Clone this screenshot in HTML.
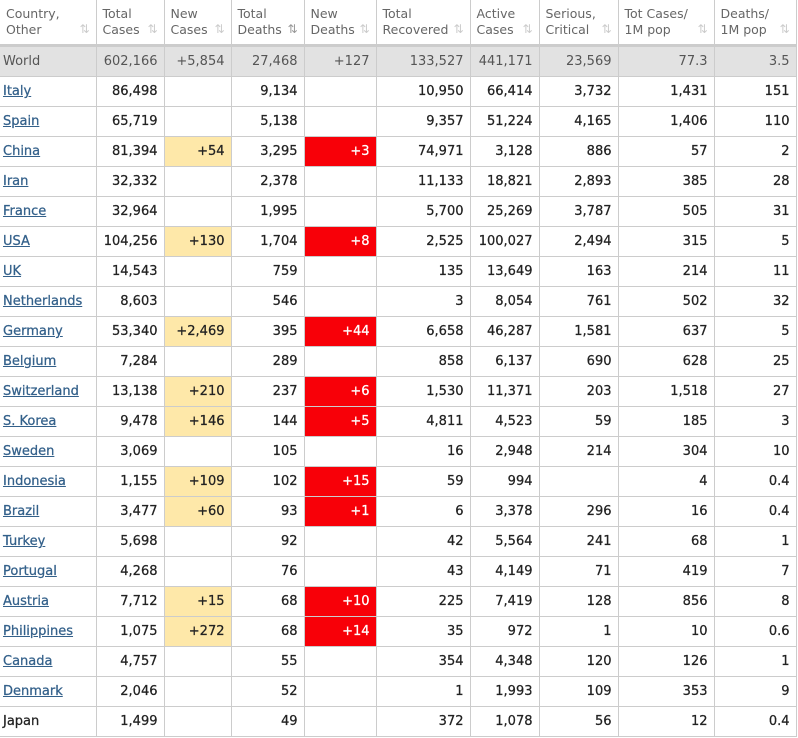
<!DOCTYPE html>
<html><head><meta charset="utf-8"><style>
body{margin:0;background:#fff;font-family:"DejaVu Sans",Verdana,sans-serif;}
table{border-collapse:collapse;table-layout:fixed;width:796px;font-size:13px;}
td,th{border:1px solid #ccc;height:29px;padding:0 6px;text-align:right;color:#222;white-space:nowrap;overflow:hidden;}
th{height:44px;font-weight:normal;color:#666;text-align:left;vertical-align:middle;font-size:12.5px;line-height:16px;border-bottom:3px solid #ccc;border-top:none;position:relative;padding:0 6px}
th span{position:absolute;right:6px;bottom:7px;color:#ccc;font-size:12px}
td{font-weight:normal;color:#222;-webkit-text-stroke:0.25px #222}
td:first-child{text-align:left;padding-left:3px}
td a{color:#33608a;text-decoration:underline;-webkit-text-stroke:0.25px #33608a}
tr.w td{background:#e2e2e2;color:#555;-webkit-text-stroke:0}
.y{background:#fee8a9}
td.r{background:#f80008;color:#fff;-webkit-text-stroke:0.25px #fff}
td:first-child,th:first-child{border-left:none}
</style></head><body>
<table>
<colgroup><col style="width:96px"><col style="width:68px"><col style="width:67px"><col style="width:73px"><col style="width:72px"><col style="width:94px"><col style="width:69px"><col style="width:79px"><col style="width:96px"><col style="width:82px"></colgroup>
<tr><th>Country,<br>Other<span>⇅</span></th><th>Total<br>Cases<span>⇅</span></th><th>New<br>Cases<span>⇅</span></th><th>Total<br>Deaths<span style="color:#999">⇅</span></th><th>New<br>Deaths<span>⇅</span></th><th>Total<br>Recovered<span>⇅</span></th><th>Active<br>Cases<span>⇅</span></th><th>Serious,<br>Critical<span>⇅</span></th><th>Tot Cases/<br>1M pop<span>⇅</span></th><th>Deaths/<br>1M pop<span>⇅</span></th></tr>
<tr class="w"><td>World</td><td>602,166</td><td>+5,854</td><td>27,468</td><td>+127</td><td>133,527</td><td>441,171</td><td>23,569</td><td>77.3</td><td>3.5</td></tr>
<tr><td><a>Italy</a></td><td>86,498</td><td></td><td>9,134</td><td></td><td>10,950</td><td>66,414</td><td>3,732</td><td>1,431</td><td>151</td></tr>
<tr><td><a>Spain</a></td><td>65,719</td><td></td><td>5,138</td><td></td><td>9,357</td><td>51,224</td><td>4,165</td><td>1,406</td><td>110</td></tr>
<tr><td><a>China</a></td><td>81,394</td><td class="y">+54</td><td>3,295</td><td class="r">+3</td><td>74,971</td><td>3,128</td><td>886</td><td>57</td><td>2</td></tr>
<tr><td><a>Iran</a></td><td>32,332</td><td></td><td>2,378</td><td></td><td>11,133</td><td>18,821</td><td>2,893</td><td>385</td><td>28</td></tr>
<tr><td><a>France</a></td><td>32,964</td><td></td><td>1,995</td><td></td><td>5,700</td><td>25,269</td><td>3,787</td><td>505</td><td>31</td></tr>
<tr><td><a>USA</a></td><td>104,256</td><td class="y">+130</td><td>1,704</td><td class="r">+8</td><td>2,525</td><td>100,027</td><td>2,494</td><td>315</td><td>5</td></tr>
<tr><td><a>UK</a></td><td>14,543</td><td></td><td>759</td><td></td><td>135</td><td>13,649</td><td>163</td><td>214</td><td>11</td></tr>
<tr><td><a>Netherlands</a></td><td>8,603</td><td></td><td>546</td><td></td><td>3</td><td>8,054</td><td>761</td><td>502</td><td>32</td></tr>
<tr><td><a>Germany</a></td><td>53,340</td><td class="y">+2,469</td><td>395</td><td class="r">+44</td><td>6,658</td><td>46,287</td><td>1,581</td><td>637</td><td>5</td></tr>
<tr><td><a>Belgium</a></td><td>7,284</td><td></td><td>289</td><td></td><td>858</td><td>6,137</td><td>690</td><td>628</td><td>25</td></tr>
<tr><td><a>Switzerland</a></td><td>13,138</td><td class="y">+210</td><td>237</td><td class="r">+6</td><td>1,530</td><td>11,371</td><td>203</td><td>1,518</td><td>27</td></tr>
<tr><td><a>S. Korea</a></td><td>9,478</td><td class="y">+146</td><td>144</td><td class="r">+5</td><td>4,811</td><td>4,523</td><td>59</td><td>185</td><td>3</td></tr>
<tr><td><a>Sweden</a></td><td>3,069</td><td></td><td>105</td><td></td><td>16</td><td>2,948</td><td>214</td><td>304</td><td>10</td></tr>
<tr><td><a>Indonesia</a></td><td>1,155</td><td class="y">+109</td><td>102</td><td class="r">+15</td><td>59</td><td>994</td><td></td><td>4</td><td>0.4</td></tr>
<tr><td><a>Brazil</a></td><td>3,477</td><td class="y">+60</td><td>93</td><td class="r">+1</td><td>6</td><td>3,378</td><td>296</td><td>16</td><td>0.4</td></tr>
<tr><td><a>Turkey</a></td><td>5,698</td><td></td><td>92</td><td></td><td>42</td><td>5,564</td><td>241</td><td>68</td><td>1</td></tr>
<tr><td><a>Portugal</a></td><td>4,268</td><td></td><td>76</td><td></td><td>43</td><td>4,149</td><td>71</td><td>419</td><td>7</td></tr>
<tr><td><a>Austria</a></td><td>7,712</td><td class="y">+15</td><td>68</td><td class="r">+10</td><td>225</td><td>7,419</td><td>128</td><td>856</td><td>8</td></tr>
<tr><td><a>Philippines</a></td><td>1,075</td><td class="y">+272</td><td>68</td><td class="r">+14</td><td>35</td><td>972</td><td>1</td><td>10</td><td>0.6</td></tr>
<tr><td><a>Canada</a></td><td>4,757</td><td></td><td>55</td><td></td><td>354</td><td>4,348</td><td>120</td><td>126</td><td>1</td></tr>
<tr><td><a>Denmark</a></td><td>2,046</td><td></td><td>52</td><td></td><td>1</td><td>1,993</td><td>109</td><td>353</td><td>9</td></tr>
<tr><td>Japan</td><td>1,499</td><td></td><td>49</td><td></td><td>372</td><td>1,078</td><td>56</td><td>12</td><td>0.4</td></tr>
</table>
</body></html>
